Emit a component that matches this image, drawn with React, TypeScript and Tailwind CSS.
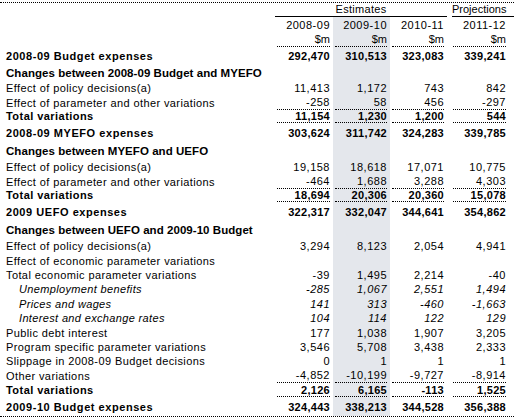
import React from "react";

type Kind = "expense" | "heading" | "normal" | "italic" | "total";

interface RowDef {
  label: string;
  kind: Kind;
  vals?: string[];
  h: string;
  dotted?: boolean;
  full?: boolean;
}

const rows: RowDef[] = [
  { label: "2008-09 Budget expenses", kind: "expense", vals: ["292,470", "310,513", "323,083", "339,241"], h: "h-[17px]" },
  { label: "Changes between 2008-09 Budget and MYEFO", kind: "heading", h: "h-[17px]" },
  { label: "Effect of policy decisions(a)", kind: "normal", vals: ["11,413", "1,172", "743", "842"], h: "h-[14.4px]" },
  { label: "Effect of parameter and other variations", kind: "normal", vals: ["-258", "58", "456", "-297"], h: "h-[14.6px]", dotted: true },
  { label: "Total variations", kind: "total", vals: ["11,154", "1,230", "1,200", "544"], h: "h-[13px]", dotted: true },
  { label: "2008-09 MYEFO expenses", kind: "expense", vals: ["303,624", "311,742", "324,283", "339,785"], h: "h-[20px]" },
  { label: "Changes between MYEFO and UEFO", kind: "heading", h: "h-[17px]" },
  { label: "Effect of policy decisions(a)", kind: "normal", vals: ["19,158", "18,618", "17,071", "10,775"], h: "h-[14.4px]" },
  { label: "Effect of parameter and other variations", kind: "normal", vals: ["-464", "1,688", "3,288", "4,303"], h: "h-[14.6px]", dotted: true },
  { label: "Total variations", kind: "total", vals: ["18,694", "20,306", "20,360", "15,078"], h: "h-[13px]", dotted: true },
  { label: "2009 UEFO expenses", kind: "expense", vals: ["322,317", "332,047", "344,641", "354,862"], h: "h-[20px]" },
  { label: "Changes between UEFO and 2009-10 Budget", kind: "heading", h: "h-[17px]" },
  { label: "Effect of policy decisions(a)", kind: "normal", vals: ["3,294", "8,123", "2,054", "4,941"], h: "h-[14.4px]" },
  { label: "Effect of economic parameter variations", kind: "normal", h: "h-[14.4px]" },
  { label: "Total economic parameter variations", kind: "normal", vals: ["-39", "1,495", "2,214", "-40"], h: "h-[14.4px]" },
  { label: "Unemployment benefits", kind: "italic", vals: ["-285", "1,067", "2,551", "1,494"], h: "h-[14.4px]" },
  { label: "Prices and wages", kind: "italic", vals: ["141", "313", "-460", "-1,663"], h: "h-[14.4px]" },
  { label: "Interest and exchange rates", kind: "italic", vals: ["104", "114", "122", "129"], h: "h-[14.4px]" },
  { label: "Public debt interest", kind: "normal", vals: ["177", "1,038", "1,907", "3,205"], h: "h-[14.4px]" },
  { label: "Program specific parameter variations", kind: "normal", vals: ["3,546", "5,708", "3,438", "2,333"], h: "h-[14.4px]" },
  { label: "Slippage in 2008-09 Budget decisions", kind: "normal", vals: ["0", "1", "1", "1"], h: "h-[14.4px]" },
  { label: "Other variations", kind: "normal", vals: ["-4,852", "-10,199", "-9,727", "-8,914"], h: "h-[15px]", dotted: true },
  { label: "Total variations", kind: "total", vals: ["2,126", "6,165", "-113", "1,525"], h: "h-[14px]", dotted: true },
  { label: "2009-10 Budget expenses", kind: "expense", vals: ["324,443", "338,213", "344,528", "356,388"], h: "h-[20px]", full: true },
];

const cellCls = [
  "w-[61px] pl-[5px] pr-[3px]",
  "w-[57px] pl-[2px] pr-[3px] bg-[#e4e7ec]",
  "w-[57px] pl-[2px] pr-[3px]",
  "w-[67px] pl-[6px] pr-[8px]",
];

function labelCls(kind: Kind) {
  switch (kind) {
    case "expense":
      return "pl-[6px] font-bold text-[11px] tracking-[0.55px]";
    case "heading":
      return "pl-[6px] font-bold text-[11.5px] tracking-[0.05px]";
    case "total":
      return "pl-[6px] font-bold text-[11px] tracking-[0.45px]";
    case "italic":
      return "pl-[19px] italic text-[11px] tracking-[0.35px]";
    default:
      return "pl-[6px] text-[11px] tracking-[0.4px]";
  }
}

function numCls(kind: Kind) {
  switch (kind) {
    case "expense":
    case "total":
      return "font-bold text-[11px] tracking-[0.3px]";
    case "italic":
      return "italic text-[11px] tracking-[0.5px]";
    default:
      return "text-[11px] tracking-[0.5px]";
  }
}

function Row({ r }: { r: RowDef }) {
  return (
    <div className={`flex ${r.h} ${r.full ? "border-b border-dotted border-black" : ""}`}>
      <div className={`w-[272px] shrink-0 flex items-center whitespace-nowrap leading-[14px] ${labelCls(r.kind)}`}>
        {r.label}
      </div>
      {cellCls.map((c, i) => (
        <div key={i} className={`${c} shrink-0 h-full`}>
          <div
            className={`h-full flex items-center justify-end whitespace-nowrap leading-[14px] ${numCls(r.kind)} ${
              r.dotted ? "border-b border-dotted border-black" : ""
            }`}
          >
            {r.vals ? r.vals[i] : ""}
          </div>
        </div>
      ))}
    </div>
  );
}

export default function App() {
  return (
    <div className="w-[514px] h-[420px] overflow-hidden bg-white text-black font-['Liberation_Sans',Arial,sans-serif]">
      <div className="h-[2px]" />
      <div className="h-[1px] border-t border-dotted border-black" />
      {/* Header row 1 */}
      <div className="flex h-[14px]">
        <div className="w-[275px] shrink-0" />
        <div className="w-[172px] shrink-0 border-b border-black flex items-center justify-center text-[11px] leading-[13px] tracking-[0.3px]">
          Estimates
        </div>
        <div className="ml-[5px] flex-1 border-b border-black flex items-center justify-end pr-[8px] text-[11px] leading-[13px]">
          Projections
        </div>
      </div>
      {/* Header row 2 */}
      <div className="flex h-[15px]">
        <div className="w-[272px] shrink-0" />
        {["2008-09", "2009-10", "2010-11", "2011-12"].map((t, i) => (
          <div key={i} className={`${cellCls[i]} shrink-0 h-full flex items-center justify-end text-[11px] tracking-[0.5px] leading-[14px]`}>
            {t}
          </div>
        ))}
      </div>
      {/* Header row 3 */}
      <div className="flex h-[15px]">
        <div className="w-[272px] shrink-0" />
        {[0, 1, 2, 3].map((i) => (
          <div key={i} className={`${cellCls[i]} shrink-0 h-full`}>
            <div className="h-full flex items-center justify-end border-b border-dotted border-black text-[11px] leading-[14px]">
              $m
            </div>
          </div>
        ))}
      </div>
      {rows.map((r, i) => (
        <Row key={i} r={r} />
      ))}
    </div>
  );
}
